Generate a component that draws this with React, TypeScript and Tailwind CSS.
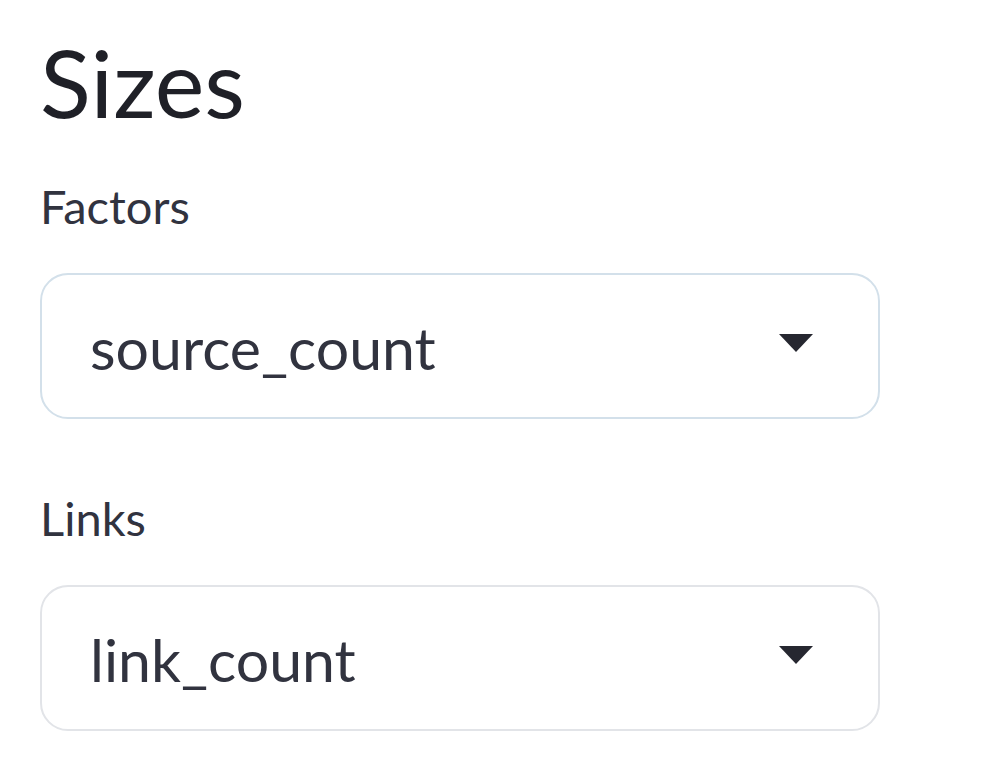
import React from "react";

const font = { fontFamily: "Lato, 'Noto Sans', sans-serif" };

function Select(props: { value: string; focused?: boolean }) {
    return (
        <div
            className={
                "flex h-[146px] w-[840px] items-center justify-between rounded-[28px] border-2 bg-white pl-[48px] pr-[64px] " +
                (props.focused ? "border-[#d3e0ea]" : "border-[#e2e4e8]")
            }
        >
            <span className="mt-[3px] text-[59px] text-[#31333f]">{props.value}</span>
            <svg width="36" height="20" viewBox="0 0 36 20" className="-mt-[6px]">
                <path d="M1 1 L35 1 L18 19 Z" fill="#262730" />
            </svg>
        </div>
    );
}

export default function App() {
    return (
        <div className="min-h-[768px] w-[1000px] bg-white pl-[40px] pt-[30px]" style={font}>
            <h3 className="text-[94px] leading-[1.1] font-normal text-[#1f2027]">Sizes</h3>
            <div className="mt-[50px] text-[47px] leading-none text-[#31333f]">Factors</div>
            <div className="mt-[43px]">
                <Select value="source_count" focused />
            </div>
            <div className="mt-[76px] text-[47px] leading-none text-[#31333f]">Links</div>
            <div className="mt-[43px]">
                <Select value="link_count" />
            </div>
        </div>
    );
}
